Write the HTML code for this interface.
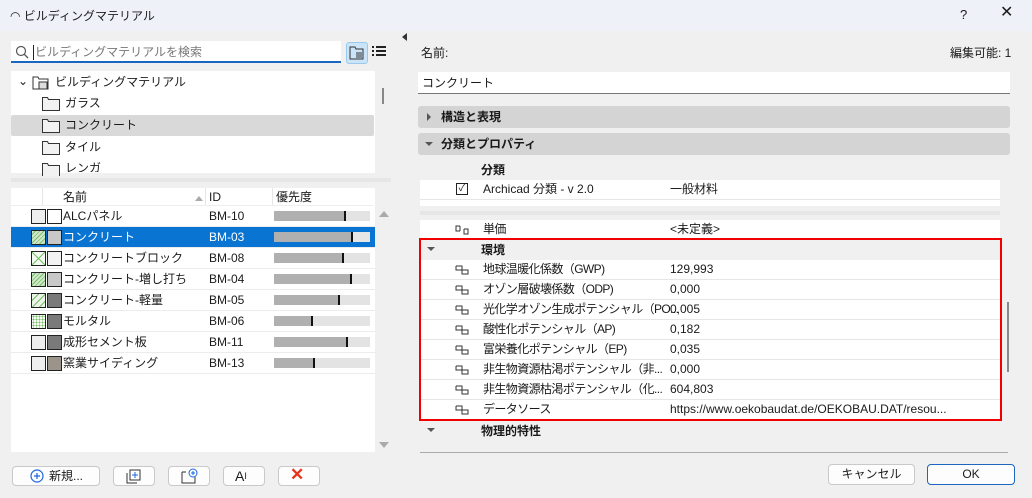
<!DOCTYPE html><html><head><meta charset="utf-8"><style>
*{box-sizing:border-box;margin:0;padding:0}
body{width:1032px;height:498px;background:#f0f0f0;font-family:"Liberation Sans","Noto Sans CJK JP",sans-serif;font-size:12px;line-height:15px;color:#1a1a1a;position:relative;overflow:hidden}
.a{position:absolute}
.t{white-space:nowrap;line-height:15px}
.row{position:absolute;left:11px;width:364px;height:21px;border-bottom:1px solid #ececec;background:#fff}
.row .t{top:3px!important}
.sw{position:absolute;top:3px;width:15px;height:15px;border:1px solid #222;background:#eee}
.bar{position:absolute;left:263px;top:5px;width:96px;height:10px;background:#e3e3e3}
.bar i{position:absolute;left:0;top:0;height:10px;background:#b0b0b0;border-right:2px solid #111}
.btn{position:absolute;top:466px;height:20px;border:1px solid #c9c9c9;border-radius:4px;background:#fdfdfd}
.pr{position:absolute;left:420px;width:580px;height:20px;background:#fff;border-bottom:1px solid #e6e6e6;line-height:15px}
.pr .ic{position:absolute;left:35px;top:5px}
.pr .n{position:absolute;left:63px;top:2px;white-space:nowrap;letter-spacing:-0.6px}
.pr .v{position:absolute;left:250px;top:2px;white-space:nowrap}
</style></head><body>
<div class="a" style="left:0;top:0;width:1032px;height:31px;background:#eef2f8"></div>
<div class="a t" style="left:10px;top:9px;font-size:12px">◠ ビルディングマテリアル</div>
<div class="a" style="left:960px;top:7px;font-size:13px">?</div>
<div class="a" style="left:1000px;top:5px;font-size:16px">✕</div>
<div class="a" style="left:402px;top:33px;width:0;height:0;border-top:4px solid transparent;border-bottom:4px solid transparent;border-right:5px solid #333"></div>

<div class="a" style="left:11px;top:41px;width:330px;height:22px;background:#fff;border-bottom:2px solid #1a66c0"></div>
<svg class="a" style="left:15px;top:45px" width="14" height="14"><circle cx="6" cy="6" r="4.5" fill="none" stroke="#555" stroke-width="1.2"/><line x1="9.5" y1="9.5" x2="13" y2="13" stroke="#555" stroke-width="1.3"/></svg>
<div class="a t" style="left:33px;top:45px;color:#777;border-left:1px solid #222;padding-left:1px">ビルディングマテリアルを検索</div>
<div class="a" style="left:346px;top:42px;width:22px;height:22px;background:#cce4f7;border:1px solid #99c9ef;border-radius:3px"></div>
<svg class="a" style="left:349px;top:45px" width="16" height="16"><path d="M1 2h5l1 2h7v10H1z" fill="none" stroke="#333"/><path d="M7 8h6M7 10h6M7 12h6" stroke="#333"/></svg>
<svg class="a" style="left:371px;top:45px" width="16" height="14"><path d="M1 2h2M5 2h10M1 6h2M5 6h10M1 10h2M5 10h10" stroke="#222" stroke-width="2"/></svg>

<div class="a" style="left:11px;top:71px;width:364px;height:102px;background:#fff"></div>
<div class="a" style="left:11px;top:115px;width:363px;height:21px;background:#d9d9d9;border-radius:2px"></div>
<div class="a t" style="left:18px;top:74px">⌄</div>
<svg class="a" style="left:32px;top:75px" width="20" height="16"><path d="M1 2h5l1 2h9v10H1z" fill="none" stroke="#333"/><rect x="7" y="7" width="8" height="7" fill="#ddd" stroke="#333"/></svg>
<div class="a t" style="left:55px;top:75px">ビルディングマテリアル</div>
<svg class="a" style="left:42px;top:96px" width="20" height="80"><g fill="#f2f2f2" stroke="#333"><path d="M.5 1.5h5l1 2h11v11H.5z"/><path d="M.5 23.5h5l1 2h11v11H.5z"/><path d="M.5 45.5h5l1 2h11v11H.5z"/><path d="M.5 67.5h5l1 2h11v11H.5z"/></g></svg>
<div class="a t" style="left:65px;top:96px">ガラス</div>
<div class="a t" style="left:65px;top:118px">コンクリート</div>
<div class="a t" style="left:65px;top:140px">タイル</div>
<div class="a t" style="left:65px;top:161px;height:11px;overflow:hidden">レンガ</div>
<div class="a" style="left:382px;top:88px;width:2px;height:16px;background:#888"></div>
<div class="a" style="left:11px;top:178px;width:380px;height:4px;background:#e6e6e6"></div>

<div class="a" style="left:11px;top:188px;width:364px;height:264px;background:#fff"></div>
<div class="a" style="left:11px;top:188px;width:362px;height:18px;background:#fff;border-bottom:1px solid #eee"></div>
<div class="a" style="left:42px;top:188px;width:1px;height:17px;background:#e6e6e6"></div>
<div class="a" style="left:205px;top:188px;width:1px;height:17px;background:#e6e6e6"></div>
<div class="a" style="left:272px;top:188px;width:1px;height:17px;background:#e6e6e6"></div>
<div class="a t" style="left:63px;top:190px">名前</div>
<div class="a" style="left:195px;top:196px;border-left:4px solid transparent;border-right:4px solid transparent;border-bottom:5px solid #aaa"></div>
<div class="a t" style="left:209px;top:190px">ID</div>
<div class="a t" style="left:276px;top:190px">優先度</div>

<div class="row" style="top:206px"><div class="sw" style="left:20px"></div><div class="sw" style="left:36px;background:#fff"></div><div class="a t" style="left:52px">ALCパネル</div><div class="a t" style="left:198px">BM-10</div><div class="bar"><i style="width:72px"></i></div></div>
<div class="row" style="top:227px;background:#0a74d2;color:#fff"><div class="sw" style="left:20px;background:repeating-linear-gradient(135deg,#cfe8c9 0 2px,#7bbd6d 2px 3px)"></div><div class="sw" style="left:36px;background:#c8c8c8"></div><div class="a t" style="left:52px">コンクリート</div><div class="a t" style="left:198px">BM-03</div><div class="bar" style="background:#e6e6e6"><i style="width:79px"></i></div></div>
<div class="row" style="top:248px"><div class="sw" style="left:20px;background:#f4fbf2"></div><svg class="a" style="left:21px;top:4px" width="13" height="13"><path d="M0 0L13 13M13 0L0 13" stroke="#6cbb5c"/></svg><div class="sw" style="left:36px;background:#f2f2f2"></div><div class="a t" style="left:52px">コンクリートブロック</div><div class="a t" style="left:198px">BM-08</div><div class="bar"><i style="width:70px"></i></div></div>
<div class="row" style="top:269px"><div class="sw" style="left:20px;background:repeating-linear-gradient(135deg,#cfe8c9 0 2px,#7bbd6d 2px 3px)"></div><div class="sw" style="left:36px;background:#c8c8c8"></div><div class="a t" style="left:52px">コンクリート-増し打ち</div><div class="a t" style="left:198px">BM-04</div><div class="bar"><i style="width:78px"></i></div></div>
<div class="row" style="top:290px"><div class="sw" style="left:20px;background:repeating-linear-gradient(135deg,#eaf5e7 0 4px,#7bbd6d 4px 5px)"></div><div class="sw" style="left:36px;background:#7a7a7a"></div><div class="a t" style="left:52px">コンクリート-軽量</div><div class="a t" style="left:198px">BM-05</div><div class="bar"><i style="width:66px"></i></div></div>
<div class="row" style="top:311px"><div class="sw" style="left:20px;background:radial-gradient(#7bbd6d 0.8px,#f4fbf2 1px) 0 0/3px 3px"></div><div class="sw" style="left:36px;background:#7a7a7a"></div><div class="a t" style="left:52px">モルタル</div><div class="a t" style="left:198px">BM-06</div><div class="bar"><i style="width:39px"></i></div></div>
<div class="row" style="top:332px"><div class="sw" style="left:20px"></div><div class="sw" style="left:36px;background:#7a7a7a"></div><div class="a t" style="left:52px">成形セメント板</div><div class="a t" style="left:198px">BM-11</div><div class="bar"><i style="width:74px"></i></div></div>
<div class="row" style="top:353px"><div class="sw" style="left:20px"></div><div class="sw" style="left:36px;background:#9a948b"></div><div class="a t" style="left:52px">窯業サイディング</div><div class="a t" style="left:198px">BM-13</div><div class="bar"><i style="width:41px"></i></div></div>
<div class="a" style="left:379px;top:211px;border-left:5px solid transparent;border-right:5px solid transparent;border-bottom:6px solid #aaa"></div>
<div class="a" style="left:379px;top:442px;border-left:5px solid transparent;border-right:5px solid transparent;border-top:6px solid #aaa"></div>

<div class="btn" style="left:12px;width:88px"></div>
<svg class="a" style="left:30px;top:469px" width="14" height="14"><circle cx="7" cy="7" r="6" fill="none" stroke="#1a66e0" stroke-width="1.2"/><path d="M7 4v6M4 7h6" stroke="#1a66e0" stroke-width="1.2"/></svg>
<div class="a t" style="left:49px;top:469px">新規...</div>
<div class="btn" style="left:113px;width:42px"></div>
<svg class="a" style="left:126px;top:469px" width="16" height="15"><rect x="4" y="1" width="10" height="10" fill="#fff" stroke="#333"/><path d="M1 4v10h10" fill="none" stroke="#333"/><path d="M9 3v6M6 6h6" stroke="#1a66e0"/></svg>
<div class="btn" style="left:168px;width:42px"></div>
<svg class="a" style="left:181px;top:468px" width="17" height="16"><path d="M1 4h4M1 4v11h13V9" fill="none" stroke="#333"/><circle cx="12" cy="5" r="4" fill="#fff" stroke="#1a66e0"/><path d="M12 3v4M10 5h4" stroke="#1a66e0"/></svg>
<div class="btn" style="left:223px;width:42px"></div>
<div class="a t" style="left:235px;top:469px;font-size:14px">A<span style="font-size:9px;vertical-align:top">I</span></div>
<div class="btn" style="left:278px;width:42px"></div>
<div class="a t" style="left:290px;top:467px;font-size:17px;color:#e8331c;font-weight:bold">✕</div>

<div class="a t" style="left:421px;top:46px">名前:</div>
<div class="a t" style="left:950px;top:46px">編集可能: 1</div>
<div class="a" style="left:418px;top:72px;width:592px;height:22px;background:#fff;border-bottom:1px solid #777"></div>
<div class="a t" style="left:422px;top:76px">コンクリート</div>
<div class="a" style="left:418px;top:106px;width:592px;height:22px;background:#d4d4d4;border-radius:3px"></div>
<div class="a" style="left:427px;top:113px;border-top:4px solid transparent;border-bottom:4px solid transparent;border-left:4px solid #555"></div>
<div class="a t" style="left:441px;top:110px;font-weight:bold">構造と表現</div>
<div class="a" style="left:418px;top:133px;width:592px;height:22px;background:#d4d4d4;border-radius:3px"></div>
<div class="a" style="left:425px;top:142px;border-left:4px solid transparent;border-right:4px solid transparent;border-top:4px solid #555"></div>
<div class="a t" style="left:441px;top:137px;font-weight:bold">分類とプロパティ</div>

<div class="a" style="left:420px;top:160px;width:580px;height:20px;background:#f0f0f0"></div>
<div class="a t" style="left:481px;top:163px;font-weight:bold">分類</div>
<div class="pr" style="top:180px"><div class="a" style="left:36px;top:3px;width:12px;height:12px;border:1px solid #222;font-size:10px;line-height:10px;text-align:center">✓</div><div class="n" style="letter-spacing:0">Archicad 分類 - v 2.0</div><div class="v">一般材料</div></div>
<div class="a" style="left:420px;top:200px;width:580px;height:6px;background:#fff"></div>
<div class="a" style="left:420px;top:211px;width:580px;height:4px;background:#e6e6e6"></div>
<div class="a" style="left:420px;top:220px;width:580px;height:220px;background:#fff"></div>
<div class="pr" style="top:220px"><svg class="ic" width="14" height="10"><path d="M5 1H1v5h4M5 1v5M9 4h4v5H9V4" fill="none" stroke="#333"/></svg><div class="n">単価</div><div class="v">&lt;未定義&gt;</div></div>
<div class="a" style="left:420px;top:240px;width:580px;height:20px;background:#f0f0f0"></div>
<div class="a" style="left:427px;top:247px;border-left:4px solid transparent;border-right:4px solid transparent;border-top:4px solid #555"></div>
<div class="a t" style="left:481px;top:243px;font-weight:bold">環境</div>
<div class="pr" style="top:260px"><svg class="ic" width="14" height="10"><path d="M1 1h6v4H13v4H7V5M1 1v4h6" fill="none" stroke="#333"/></svg><div class="n">地球温暖化係数（GWP)</div><div class="v">129,993</div></div>
<div class="pr" style="top:280px"><svg class="ic" width="14" height="10"><path d="M1 1h6v4H13v4H7V5M1 1v4h6" fill="none" stroke="#333"/></svg><div class="n">オゾン層破壊係数（ODP)</div><div class="v">0,000</div></div>
<div class="pr" style="top:300px"><svg class="ic" width="14" height="10"><path d="M1 1h6v4H13v4H7V5M1 1v4h6" fill="none" stroke="#333"/></svg><div class="n">光化学オゾン生成ポテンシャル（PO...</div><div class="v">0,005</div></div>
<div class="pr" style="top:320px"><svg class="ic" width="14" height="10"><path d="M1 1h6v4H13v4H7V5M1 1v4h6" fill="none" stroke="#333"/></svg><div class="n">酸性化ポテンシャル（AP)</div><div class="v">0,182</div></div>
<div class="pr" style="top:340px"><svg class="ic" width="14" height="10"><path d="M1 1h6v4H13v4H7V5M1 1v4h6" fill="none" stroke="#333"/></svg><div class="n">富栄養化ポテンシャル（EP)</div><div class="v">0,035</div></div>
<div class="pr" style="top:360px"><svg class="ic" width="14" height="10"><path d="M1 1h6v4H13v4H7V5M1 1v4h6" fill="none" stroke="#333"/></svg><div class="n">非生物資源枯渇ポテンシャル（非...</div><div class="v">0,000</div></div>
<div class="pr" style="top:380px"><svg class="ic" width="14" height="10"><path d="M1 1h6v4H13v4H7V5M1 1v4h6" fill="none" stroke="#333"/></svg><div class="n">非生物資源枯渇ポテンシャル（化...</div><div class="v">604,803</div></div>
<div class="pr" style="top:400px"><svg class="ic" width="14" height="10"><path d="M1 1h6v4H13v4H7V5M1 1v4h6" fill="none" stroke="#333"/></svg><div class="n">データソース</div><div class="v">https://www.oekobaudat.de/OEKOBAU.DAT/resou...</div></div>
<div class="a" style="left:420px;top:420px;width:580px;height:21px;background:#f0f0f0"></div>
<div class="a" style="left:427px;top:428px;border-left:4px solid transparent;border-right:4px solid transparent;border-top:4px solid #555"></div>
<div class="a t" style="left:481px;top:424px;font-weight:bold">物理的特性</div>
<div class="a" style="left:419px;top:238px;width:583px;height:183px;border:2px solid #f00000"></div>
<div class="a" style="left:1007px;top:302px;width:2px;height:70px;background:#888"></div>
<div class="a" style="left:420px;top:452px;width:588px;height:1px;background:#aaa"></div>
<div class="a" style="left:828px;top:464px;width:87px;height:21px;border:1px solid #c9c9c9;border-radius:4px;background:#fdfdfd;text-align:center;line-height:19px">キャンセル</div>
<div class="a" style="left:927px;top:464px;width:88px;height:21px;border:1px solid #1a66c0;border-radius:4px;background:#fdfdfd;text-align:center;line-height:19px">OK</div>
</body></html>
